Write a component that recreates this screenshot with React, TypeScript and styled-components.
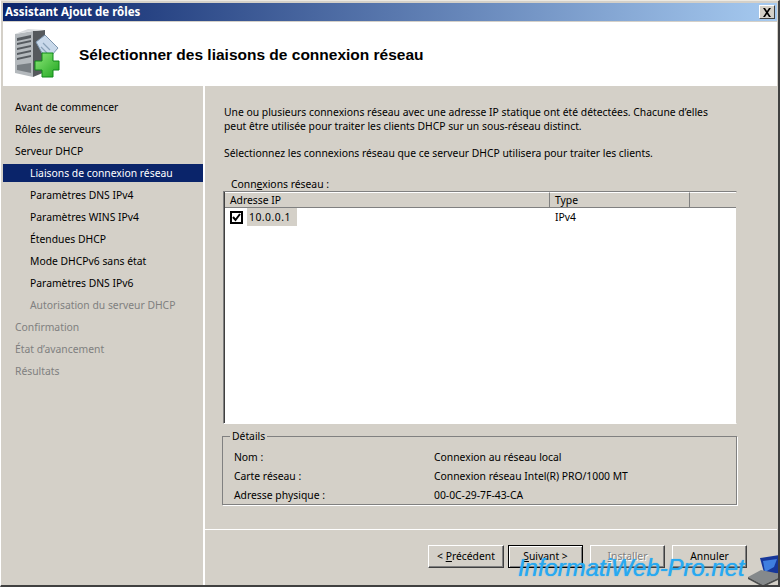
import React from "react";
import styled, { createGlobalStyle } from "styled-components";

const GlobalStyle = createGlobalStyle`
  html, body {
    margin: 0;
    padding: 0;
    background: #d4d0c8;
  }
  * {
    box-sizing: border-box;
  }
`;

const steps = [
  { label: "Avant de commencer", level: 0, state: "normal" },
  { label: "Rôles de serveurs", level: 0, state: "normal" },
  { label: "Serveur DHCP", level: 0, state: "normal" },
  { label: "Liaisons de connexion réseau", level: 1, state: "active" },
  { label: "Paramètres DNS IPv4", level: 1, state: "normal" },
  { label: "Paramètres WINS IPv4", level: 1, state: "normal" },
  { label: "Étendues DHCP", level: 1, state: "normal" },
  { label: "Mode DHCPv6 sans état", level: 1, state: "normal" },
  { label: "Paramètres DNS IPv6", level: 1, state: "normal" },
  { label: "Autorisation du serveur DHCP", level: 1, state: "disabled" },
  { label: "Confirmation", level: 0, state: "disabled" },
  { label: "État d’avancement", level: 0, state: "disabled" },
  { label: "Résultats", level: 0, state: "disabled" },
];

const App = () => {
  return (
    <Window>
      <GlobalStyle />
      <TitleBar>
        <TitleText>Assistant Ajout de rôles</TitleText>
        <CloseButton>
          <svg width="10" height="9" viewBox="0 0 10 9">
            <path d="M1 0h2l2 3 2-3h2L6 4.5 9 9H7L5 6 3 9H1l3-4.5z" fill="#000" />
          </svg>
        </CloseButton>
      </TitleBar>
      <Header>
        <ServerIcon />
        <HeaderTitle>Sélectionner des liaisons de connexion réseau</HeaderTitle>
      </Header>
      <Body>
        <Sidebar>
          {steps.map((step) => (
            <Step key={step.label} $level={step.level} $state={step.state}>
              {step.label}
            </Step>
          ))}
        </Sidebar>
        <Main>
          <Content>
            <Paragraph>
              Une ou plusieurs connexions réseau avec une adresse IP statique ont été détectées. Chacune d’elles
              <br />
              peut être utilisée pour traiter les clients DHCP sur un sous-réseau distinct.
            </Paragraph>
            <Paragraph>
              Sélectionnez les connexions réseau que ce serveur DHCP utilisera pour traiter les clients.
            </Paragraph>
            <ListLabel>
              Conn<u>e</u>xions réseau :
            </ListLabel>
            <ListBox>
              <ListHead>
                <HeadCell $width={325}>Adresse IP</HeadCell>
                <HeadCell $width={140}>Type</HeadCell>
                <HeadCell $width={46} />
              </ListHead>
              <ListRow>
                <RowFirstCell>
                  <CheckBox>
                    <svg width="9" height="9" viewBox="0 0 9 9">
                      <path d="M1 4l2.5 3L8 1" fill="none" stroke="#000" strokeWidth="2" />
                    </svg>
                  </CheckBox>
                  <IpValue>10.0.0.1</IpValue>
                </RowFirstCell>
                <RowTypeCell>IPv4</RowTypeCell>
              </ListRow>
            </ListBox>
            <Details>
              <DetailsLegend>Détails</DetailsLegend>
              <DetailRow>
                <DetailName>Nom :</DetailName>
                <span>Connexion au réseau local</span>
              </DetailRow>
              <DetailRow>
                <DetailName>Carte réseau :</DetailName>
                <span>Connexion réseau Intel(R) PRO/1000 MT</span>
              </DetailRow>
              <DetailRow>
                <DetailName>Adresse physique :</DetailName>
                <span>00-0C-29-7F-43-CA</span>
              </DetailRow>
            </Details>
          </Content>
          <Footer>
            <NavButtons>
              <WizardButton $wide>
                &lt; <u>P</u>récédent
              </WizardButton>
              <WizardButton $primary>
                <u>S</u>uivant &gt;
              </WizardButton>
            </NavButtons>
            <WizardButton $disabled>
              <u>I</u>nstaller
            </WizardButton>
            <WizardButton>Annuler</WizardButton>
          </Footer>
        </Main>
      </Body>
      <Watermark>InformatiWeb-Pro.net</Watermark>
      <LaptopLogo>
        <svg width="32" height="32" viewBox="0 0 32 32">
          <path d="M12 3 32 0v18l-15 3z" fill="#16379a" />
          <path d="M15 6l14-2-3 8-9 5z" fill="#3f7fe0" />
          <path d="M0 22 13 15l19 4v3L15 30z" fill="#85898b" />
          <path d="M0 22l15 8 17-8v2L15 32 0 24z" fill="#4b4d4e" />
        </svg>
      </LaptopLogo>
    </Window>
  );
};

const ServerIcon = () => (
  <IconWrap>
    <svg width="46" height="50" viewBox="0 0 46 50">
      <defs>
        <linearGradient id="plusFill" x1="0" y1="0" x2="1" y2="1">
          <stop offset="0" stopColor="#8fe87a" />
          <stop offset="1" stopColor="#1fa51f" />
        </linearGradient>
      </defs>
      <path d="M19 2 31 1v42l-12 5z" fill="#55595d" />
      <path d="M1 5 19 2v46L1 44z" fill="#b4b9bd" />
      <path d="M1 5 19 2 31 1 14 0z" fill="#d9dcdf" />
      <path d="M3 9l14-3v3L3 12zM3 14l14-3v2L3 16zM3 19l14-3v2L3 21zM3 24l14-3v2L3 26zM3 29l14-3v2L3 31z" fill="#565b60" />
      <path d="M3 36l14-2v10L3 41z" fill="#787e83" />
      <path d="M22 13l9-7 13 13-7 8-9-3z" fill="#c9d9ea" stroke="#7d95ae" />
      <path d="M29 14l7 7M27 18l6 6" stroke="#8aa2b8" strokeWidth="1.2" />
      <path d="M28 24h11v8h6v9h-6v7H28v-7h-7v-9h7z" fill="url(#plusFill)" stroke="#0f8a18" />
    </svg>
  </IconWrap>
);

const Window = styled.div`
  position: relative;
  width: 780px;
  height: 587px;
  overflow: hidden;
  display: flex;
  flex-direction: column;
  padding: 2px 1px 0 2px;
  background: #d4d0c8;
  border-top: 1px solid #ece9e2;
  border-left: 1px solid #ffffff;
  border-right: 2px solid #404040;
  border-bottom: 2px solid #404040;
  font-family: "Noto Sans", Tahoma, sans-serif;
  font-size: 10.35px;
  color: #000;
`;

const TitleBar = styled.div`
  flex: none;
  height: 18px;
  display: flex;
  align-items: center;
  justify-content: space-between;
  padding: 0 2px;
  background: linear-gradient(90deg, #0a246a 0%, #a6caf0 100%);
`;

const TitleText = styled.span`
  margin-top: -1px;
  color: #fff;
  font-weight: bold;
  font-size: 11.5px;
`;

const CloseButton = styled.div`
  width: 16px;
  height: 14px;
  display: flex;
  align-items: center;
  justify-content: center;
  background: #d4d0c8;
  border: 1px solid;
  border-color: #fff #404040 #404040 #fff;
`;

const Header = styled.div`
  flex: none;
  height: 64px;
  margin-top: 1px;
  display: flex;
  align-items: center;
  background: #fff;
`;

const IconWrap = styled.div`
  flex: none;
  width: 76px;
  padding-left: 11px;
  display: flex;
`;

const HeaderTitle = styled.h1`
  margin: 1px 0 0 0;
  font-family: "Liberation Sans", Arial, sans-serif;
  font-size: 15.5px;
  font-weight: bold;
  color: #000;
`;

const Body = styled.div`
  flex: 1;
  display: flex;
  min-height: 0;
`;

const Sidebar = styled.div`
  flex: none;
  width: 200px;
  padding-top: 12px;
`;

const Step = styled.div<{ $level: number; $state: string }>`
  height: 18px;
  margin-bottom: 4px;
  line-height: 18px;
  padding-left: ${(p) => (p.$level === 1 ? 27 : 12)}px;
  background: ${(p) => (p.$state === "active" ? "#0a246a" : "transparent")};
  color: ${(p) =>
    p.$state === "active" ? "#fff" : p.$state === "disabled" ? "#808080" : "#000"};
`;

const Main = styled.div`
  flex: 1;
  display: flex;
  flex-direction: column;
  border-left: 2px solid #fff;
`;

const Content = styled.div`
  height: 444px;
  padding: 19px 40px 0 19px;
  border-bottom: 1px solid #fff;
`;

const Paragraph = styled.p`
  margin: 0 0 13px 0;
  line-height: 14px;
`;

const ListLabel = styled.div`
  margin: 18px 0 0 7px;
  height: 13px;
  line-height: 13px;
`;

const ListBox = styled.div`
  width: 514px;
  height: 233px;
  margin-left: -1px;
  background: #fff;
  border: 1px solid;
  border-color: #808080 #d4d0c8 #fff #808080;
  box-shadow: inset 1px 1px 0 #404040;
`;

const ListHead = styled.div`
  display: flex;
  height: 16px;
  margin-left: 1px;
  background: #d4d0c8;
`;

const HeadCell = styled.div<{ $width: number }>`
  width: ${(p) => p.$width}px;
  padding-left: 5px;
  line-height: 15px;
  border-right: 1px solid #808080;
  border-bottom: 1px solid #808080;
  border-top: 1px solid #fff;
  &:last-child {
    flex: 1;
    border-right: 0;
  }
`;

const ListRow = styled.div`
  display: flex;
  align-items: center;
  height: 18px;
`;

const RowFirstCell = styled.div`
  width: 326px;
  display: flex;
  align-items: center;
  padding-left: 6px;
`;

const RowTypeCell = styled.div`
  padding-left: 5px;
`;

const CheckBox = styled.div`
  width: 13px;
  height: 13px;
  display: flex;
  align-items: center;
  justify-content: center;
  border: 2px solid #000;
  background: #fff;
`;

const IpValue = styled.span`
  width: 50px;
  margin-left: 4px;
  padding: 0 2px;
  height: 18px;
  line-height: 18px;
  letter-spacing: 0.5px;
  background: #d4d0c8;
`;

const Details = styled.fieldset`
  width: 515px;
  height: 75px;
  margin: 6px 0 0 -2px;
  padding: 5px 0 0 11px;
  border: 1px solid #808080;
  box-shadow: 1px 1px 0 #fff;
`;

const DetailsLegend = styled.legend`
  padding: 0 2px;
  margin-left: -4px;
  line-height: 13px;
  height: 13px;
`;

const DetailRow = styled.div`
  display: flex;
  height: 19px;
  line-height: 19px;
`;

const DetailName = styled.span`
  width: 200px;
`;

const Footer = styled.div`
  flex: 1;
  display: flex;
  align-items: flex-start;
  justify-content: flex-end;
  padding: 15px 30px 0 0;
  gap: 7px;
`;

const NavButtons = styled.div`
  display: flex;
  gap: 4px;
`;

const WizardButton = styled.div<{ $primary?: boolean; $disabled?: boolean; $wide?: boolean }>`
  width: ${(p) => (p.$wide ? 76 : 75)}px;
  height: 23px;
  line-height: 20px;
  text-align: center;
  background: #d4d0c8;
  border: 1px solid;
  border-color: ${(p) => (p.$primary ? "#000" : "#fff #404040 #404040 #fff")};
  box-shadow: ${(p) => (p.$primary ? "inset 1px 1px 0 #fff, inset -1px -1px 0 #808080" : "inset -1px -1px 0 #808080")};
  color: ${(p) => (p.$disabled ? "#808080" : "#000")};
  text-shadow: ${(p) => (p.$disabled ? "1px 1px 0 #fff" : "none")};
`;

const Watermark = styled.div`
  position: absolute;
  left: 517px;
  top: 552px;
  font-family: "Liberation Sans", Arial, sans-serif;
  font-style: italic;
  font-size: 24px;
  line-height: 30px;
  letter-spacing: -0.05px;
  color: #27a9f1;
  text-shadow: 0 0 1px #27a9f1;
  white-space: nowrap;
`;

const LaptopLogo = styled.div`
  position: absolute;
  left: 747px;
  top: 554px;
  display: flex;
`;

export default App;
